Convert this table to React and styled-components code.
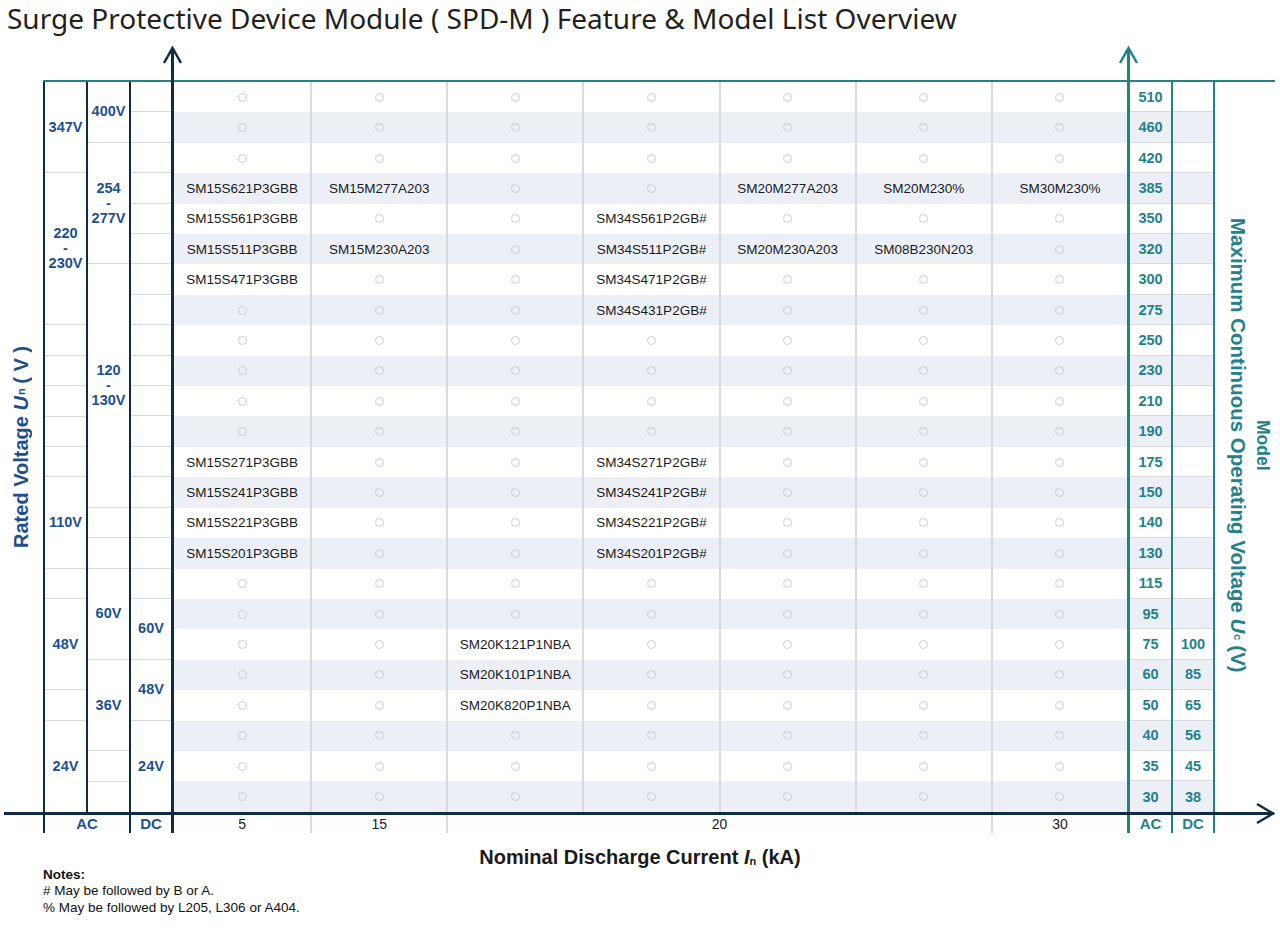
import React from "react";
import styled, { createGlobalStyle } from "styled-components";

// palette taken from the chart
const NAVY = "#1e4f8e";
const DARK = "#0f2c44";
const TEAL = "#23818a";
const GRID = "#d8dadd";
const SHADE = "#ecf0f6";
const ROW_H = 730 / 24;

const GlobalStyle = createGlobalStyle`
  html, body { margin: 0; padding: 0; background: #ffffff; }
  body { font-family: "Liberation Sans", Arial, sans-serif; color: #1a1a1a; }
  * { box-sizing: border-box; }
`;

const Page = styled.div`
  position: relative;
  width: 1280px;
  height: 940px;
  overflow: hidden;
`;

const Title = styled.h1`
  margin: 0;
  height: 40px;
  padding-left: 7px;
  font-family: "Noto Sans", sans-serif;
  font-weight: 400;
  font-size: 28px;
  line-height: 36px;
  color: #231f20;
  white-space: nowrap;
`;

const Body = styled.div`
  display: flex;
  margin-top: 40px;
`;

const LeftTitle = styled.div`
  width: 43px;
  display: flex;
  align-items: center;
  justify-content: center;
  padding-top: 2px;
`;

const VerticalUp = styled.div`
  writing-mode: vertical-rl;
  transform: rotate(180deg);
  font-weight: 700;
  font-size: 20px;
  color: ${NAVY};
  white-space: nowrap;
`;

const Framed = styled.div`
  flex: 1;
  display: flex;
  margin-right: 5px;
  border-top: 2px solid ${TEAL};
`;

const VoltGroup = styled.div`
  display: flex;
  border-right: 3px solid ${DARK};
`;

const VoltCol = styled.div`
  width: ${(p) => p.$w}px;
  border-left: 2px solid ${DARK};
  display: flex;
  flex-direction: column;
`;

const VoltCell = styled.div`
  height: ${(p) => p.$span * ROW_H}px;
  border-bottom: 1px solid ${GRID};
  display: flex;
  align-items: center;
  justify-content: center;
  text-align: center;
  white-space: pre-line;
  font-weight: 700;
  font-size: 14.5px;
  line-height: 15px;
  color: ${NAVY};

  &:last-child {
    border-bottom: none;
  }
`;

const DataArea = styled.div`
  width: 953px;
  display: flex;
  flex-direction: column;
`;

const DataRow = styled.div`
  height: ${ROW_H}px;
  display: grid;
  grid-template-columns: repeat(7, 1fr);
  background: ${(p) => (p.$shade ? SHADE : "#ffffff")};
`;

const DataCell = styled.div`
  display: flex;
  align-items: center;
  justify-content: center;
  font-size: 13.5px;
  color: #1a1a1a;

  & + & {
    border-left: 2px solid ${GRID};
  }
`;

const Dot = styled.span`
  width: 9px;
  height: 9px;
  border: 1px solid #c9cbcf;
  border-radius: 50%;
`;

const UcCol = styled.div`
  width: 44px;
  border-left: ${(p) => (p.$axis ? 3 : 2)}px solid ${TEAL};
  border-right: ${(p) => (p.$last ? `2px solid ${TEAL}` : "none")};
  display: flex;
  flex-direction: column;
`;

const UcCell = styled.div`
  height: ${ROW_H}px;
  background: ${(p) => (p.$shade ? SHADE : "#ffffff")};
  border-bottom: 1px solid ${GRID};
  display: flex;
  align-items: center;
  justify-content: center;
  font-weight: 700;
  font-size: 14.5px;
  color: ${TEAL};

  &:last-child {
    border-bottom: none;
  }
`;

const RightTitle = styled.div`
  flex: 1;
  display: flex;
  align-items: center;
  justify-content: center;
  padding-left: 9px;
  padding-bottom: 4px;
`;

const VerticalDown = styled.div`
  writing-mode: vertical-rl;
  text-align: center;
  font-weight: 700;
  color: ${TEAL};
  white-space: nowrap;
`;

const VLine = styled.div`
  font-size: ${(p) => p.$size}px;
  line-height: ${(p) => p.$lh}px;
`;

const AxisRow = styled.div`
  display: flex;
  height: 21px;
  margin: 0 6px 0 4px;
  border-top: 3px solid ${DARK};
`;

const AxisSpacer = styled.div`
  width: ${(p) => (p.$w ? `${p.$w}px` : "auto")};
  flex: ${(p) => (p.$w ? "none" : 1)};
`;

const AxisCell = styled.div`
  width: ${(p) => p.$w}px;
  display: flex;
  align-items: center;
  justify-content: center;
  font-weight: 700;
  font-size: 15px;
  color: ${(p) => p.$color};
  border-left: ${(p) => p.$left || "none"};
  border-right: ${(p) => p.$right || "none"};
`;

const AxisData = styled.div`
  width: 953px;
  display: grid;
  grid-template-columns: repeat(7, 1fr);
`;

const AxisNum = styled.div`
  grid-column: span ${(p) => p.$span};
  display: flex;
  align-items: center;
  justify-content: center;
  font-size: 14px;
  color: #1a1a1a;

  & + & {
    border-left: 2px solid ${GRID};
  }
`;

const AxisTitle = styled.div`
  margin-top: 13px;
  text-align: center;
  font-weight: 700;
  font-size: 20px;
  line-height: 22px;
  color: #1a1a1a;
`;

const Notes = styled.div`
  margin-top: -4px;
  padding-left: 43px;
  font-size: 13.5px;
  line-height: 16.5px;
  color: #111111;

  strong {
    font-weight: 700;
  }
`;

const Arrows = styled.svg`
  position: absolute;
  left: 0;
  top: 0;
  pointer-events: none;
`;

const Sub = styled.sub`
  font-size: 0.55em;
  vertical-align: baseline;
  position: relative;
  top: 0.1em;
`;

const voltAC = [
  [3, "347V"], [5, "220\n-\n230V"], [1], [1], [1], [1], [1],
  [3, "110V"], [1], [3, "48V"], [1], [3, "24V"],
];
const voltAC2 = [
  [2, "400V"], [4, "254\n-\n277V"], [8, "120\n-\n130V"], [1], [1],
  [3, "60V"], [3, "36V"], [1], [1],
];
const voltDC = [
  ...Array.from({ length: 17 }, () => [1]),
  [2, "60V"], [2, "48V"], [3, "24V"],
];

const rows = [
  { ac: "510" },
  { ac: "460" },
  { ac: "420" },
  { ac: "385", m: { 0: "SM15S621P3GBB", 1: "SM15M277A203", 4: "SM20M277A203", 5: "SM20M230%", 6: "SM30M230%" } },
  { ac: "350", m: { 0: "SM15S561P3GBB", 3: "SM34S561P2GB#" } },
  { ac: "320", m: { 0: "SM15S511P3GBB", 1: "SM15M230A203", 3: "SM34S511P2GB#", 4: "SM20M230A203", 5: "SM08B230N203" } },
  { ac: "300", m: { 0: "SM15S471P3GBB", 3: "SM34S471P2GB#" } },
  { ac: "275", m: { 3: "SM34S431P2GB#" } },
  { ac: "250" },
  { ac: "230" },
  { ac: "210" },
  { ac: "190" },
  { ac: "175", m: { 0: "SM15S271P3GBB", 3: "SM34S271P2GB#" } },
  { ac: "150", m: { 0: "SM15S241P3GBB", 3: "SM34S241P2GB#" } },
  { ac: "140", m: { 0: "SM15S221P3GBB", 3: "SM34S221P2GB#" } },
  { ac: "130", m: { 0: "SM15S201P3GBB", 3: "SM34S201P2GB#" } },
  { ac: "115" },
  { ac: "95" },
  { ac: "75", dc: "100", m: { 2: "SM20K121P1NBA" } },
  { ac: "60", dc: "85", m: { 2: "SM20K101P1NBA" } },
  { ac: "50", dc: "65", m: { 2: "SM20K820P1NBA" } },
  { ac: "40", dc: "56" },
  { ac: "35", dc: "45" },
  { ac: "30", dc: "38" },
];

const VoltColumn = ({ w, cells }) => (
  <VoltCol $w={w}>
    {cells.map(([span, label], i) => (
      <VoltCell key={i} $span={span}>{label}</VoltCell>
    ))}
  </VoltCol>
);

export default function App() {
  return (
    <Page>
      <GlobalStyle />
      <Title>Surge Protective Device Module ( SPD-M ) Feature &amp; Model List Overview</Title>

      <Body>
        <LeftTitle>
          <VerticalUp>
            Rated Voltage <i>U</i><Sub>n</Sub> ( V )
          </VerticalUp>
        </LeftTitle>

        <Framed>
          <VoltGroup>
            <VoltColumn w={43} cells={voltAC} />
            <VoltColumn w={43} cells={voltAC2} />
            <VoltColumn w={42} cells={voltDC} />
          </VoltGroup>

          <DataArea>
            {rows.map((r, i) => (
              <DataRow key={r.ac} $shade={i % 2 === 1}>
                {Array.from({ length: 7 }, (_, c) => (
                  <DataCell key={c}>{r.m && r.m[c] ? r.m[c] : <Dot />}</DataCell>
                ))}
              </DataRow>
            ))}
          </DataArea>

          <UcCol $axis>
            {rows.map((r, i) => (
              <UcCell key={r.ac} $shade={i % 2 === 1}>{r.ac}</UcCell>
            ))}
          </UcCol>
          <UcCol $last>
            {rows.map((r, i) => (
              <UcCell key={r.ac} $shade={i % 2 === 1}>{r.dc || ""}</UcCell>
            ))}
          </UcCol>

          <RightTitle>
            <VerticalDown>
              <VLine $size={17.5} $lh={24}>Model</VLine>
              <VLine $size={20.5} $lh={26}>
                Maximum Continuous Operating Voltage <i>U</i><Sub>c</Sub> (V)
              </VLine>
            </VerticalDown>
          </RightTitle>
        </Framed>
      </Body>

      <AxisRow>
        <AxisSpacer $w={39} />
        <AxisCell $w={86} $color={NAVY} $left={`2px solid ${DARK}`}>AC</AxisCell>
        <AxisCell $w={45} $color={NAVY} $left={`2px solid ${DARK}`} $right={`3px solid ${DARK}`}>DC</AxisCell>
        <AxisData>
          <AxisNum $span={1}>5</AxisNum>
          <AxisNum $span={1}>15</AxisNum>
          <AxisNum $span={4}>20</AxisNum>
          <AxisNum $span={1}>30</AxisNum>
        </AxisData>
        <AxisCell $w={44} $color={TEAL} $left={`3px solid ${TEAL}`}>AC</AxisCell>
        <AxisCell $w={44} $color={TEAL} $left={`2px solid ${TEAL}`} $right={`2px solid ${TEAL}`}>DC</AxisCell>
        <AxisSpacer />
      </AxisRow>

      <AxisTitle>
        Nominal Discharge Current <i>I</i><Sub>n</Sub> (kA)
      </AxisTitle>

      <Notes>
        <strong>Notes:</strong>
        <div># May be followed by B or A.</div>
        <div>% May be followed by L205, L306 or A404.</div>
      </Notes>

      <Arrows width="1280" height="940" viewBox="0 0 1280 940">
        <line x1="172.5" y1="48" x2="172.5" y2="82" stroke={DARK} strokeWidth="3" />
        <polyline points="164,63 172.5,48 181,63" fill="none" stroke={DARK} strokeWidth="2.5" />
        <line x1="1128.5" y1="48" x2="1128.5" y2="82" stroke={TEAL} strokeWidth="3" />
        <polyline points="1120,63 1128.5,48 1137,63" fill="none" stroke={TEAL} strokeWidth="2.5" />
        <polyline points="1257,804 1273,813.5 1257,823" fill="none" stroke={DARK} strokeWidth="2.5" />
      </Arrows>
    </Page>
  );
}
